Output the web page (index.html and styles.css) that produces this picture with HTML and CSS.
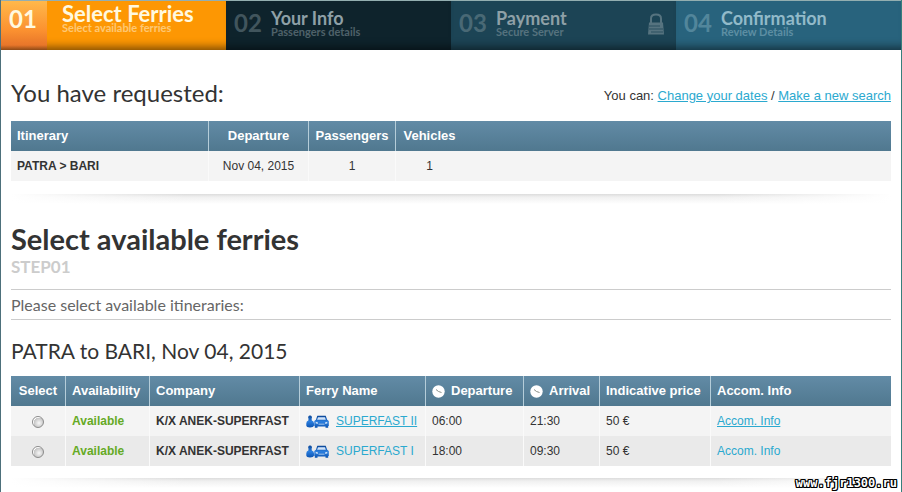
FILE: index.html
```
<!DOCTYPE html>
<html lang="en">
<head>
  <meta charset="UTF-8">
  <title>Select available ferries</title>
  <link rel="stylesheet" href="styles.css">
</head>
<body>

  <svg class="sprites" aria-hidden="true">
    <linearGradient id="blue" x1="0" y1="0" x2="0" y2="1">
      <stop offset="0" stop-color="#0a4595"/>
      <stop offset="0.5" stop-color="#2b7fe0"/>
      <stop offset="1" stop-color="#0c53b0"/>
    </linearGradient>
    <symbol id="clock" viewBox="0 0 13 13">
      <circle cx="6.5" cy="6.5" r="6.2" fill="#fff"/>
      <path d="M4 4.500L6.500 6.500L9.500 7.500" fill="none" stroke="#8a8f88" stroke-width="1"/>
    </symbol>
    <symbol id="car" viewBox="0 0 23 13">
      <path d="M4 0.500a1.800 2 0 0 1 1.600 3.200L5.800 5.400Q8 6 8 8.600v2Q7.500 12.500 4 12.500T0.300 10.600v-2Q0.300 6 2.400 5.400L2.500 3.700A1.800 2 0 0 1 4 0.500z" fill="url(#blue)"/>
      <path d="M11.300 0.800h8.400l1.500 4 1.600 1.200v5h-.6v1.800h-2.700V11.400h-8v1.400H8.800V11h-.5V6l1.600-1.200z" fill="url(#blue)"/>
      <path d="M12 2.300h7l.8 2.400h-8.700z" fill="#cfe2f8"/>
      <path d="M9.700 6.800l2.300.7v1.300l-2.300-.4zM21.300 6.800l-2.300.7v1.300l2.300-.4zM12.500 8.800h6v.7h-6z" fill="#cfe2f8"/>
    </symbol>
  </svg>

  <div class="page">
    <ol class="steps">
      <li class="step step-1 active">
        <span class="num">01</span>
        <div class="label">
          <div class="name">Select Ferries</div>
          <div class="hint">Select available ferries</div>
        </div>
      </li>
      <li class="step step-2">
        <span class="num">02</span>
        <div class="label">
          <div class="name">Your Info</div>
          <div class="hint">Passengers details</div>
        </div>
      </li>
      <li class="step step-3">
        <span class="num">03</span>
        <div class="label">
          <div class="name">Payment</div>
          <div class="hint">Secure Server</div>
        </div>
        <svg class="lock" viewBox="0 0 16 22" aria-hidden="true">
          <path d="M3 10V5.500Q3 1.500 8 1.500T13 5.500V10" fill="none" stroke="#56737f" stroke-width="2"/>
          <path d="M1 9.500h14l1 12H0z" fill="#56737f"/>
          <path d="M1 13h11M1 16h14M3 19h12" stroke="#2b5160"/>
        </svg>
      </li>
      <li class="step step-4">
        <span class="num">04</span>
        <div class="label">
          <div class="name">Confirmation</div>
          <div class="hint">Review Details</div>
        </div>
      </li>
    </ol>

    <main class="content">
      <div class="request-head">
        <h2>You have requested:</h2>
        <p>You can: <a href="#">Change your dates</a> / <a href="#">Make a new search</a></p>
      </div>

      <table class="grid request">
        <colgroup>
          <col class="c-itinerary"><col class="c-date"><col class="c-pass"><col class="c-veh"><col>
        </colgroup>
        <thead>
          <tr><th>Itinerary</th><th>Departure</th><th>Passengers</th><th>Vehicles</th><td></td></tr>
        </thead>
        <tbody>
          <tr><td><b>PATRA &gt; BARI</b></td><td>Nov 04, 2015</td><td>1</td><td>1</td><td></td></tr>
        </tbody>
      </table>
      <div class="shadow"></div>

      <h1>Select available ferries</h1>
      <div class="step-no">STEP01</div>
      <p class="notice">Please select available itineraries:</p>

      <h3>PATRA to BARI, Nov 04, 2015</h3>
      <table class="grid ferries">
        <colgroup>
          <col class="c-select"><col class="c-avail"><col class="c-company"><col class="c-ferry"><col class="c-dep"><col class="c-arr"><col class="c-price"><col>
        </colgroup>
        <thead>
          <tr>
            <th>Select</th>
            <th>Availability</th>
            <th>Company</th>
            <th>Ferry Name</th>
            <th><svg class="clock"><use href="#clock"/></svg>Departure</th>
            <th><svg class="clock"><use href="#clock"/></svg>Arrival</th>
            <th>Indicative price</th>
            <th>Accom. Info</th>
          </tr>
        </thead>
        <tbody>
          <tr>
            <td><input type="radio" name="ferry" aria-label="SUPERFAST II, 06:00"></td>
            <td class="available">Available</td>
            <td><b>K/X ANEK-SUPERFAST</b></td>
            <td><svg class="car"><use href="#car"/></svg><a href="#">SUPERFAST II</a></td>
            <td>06:00</td>
            <td>21:30</td>
            <td>50 €</td>
            <td><a href="#">Accom. Info</a></td>
          </tr>
          <tr>
            <td><input type="radio" name="ferry" aria-label="SUPERFAST I, 18:00"></td>
            <td class="available">Available</td>
            <td><b>K/X ANEK-SUPERFAST</b></td>
            <td><svg class="car"><use href="#car"/></svg><a href="#">SUPERFAST I</a></td>
            <td>18:00</td>
            <td>09:30</td>
            <td>50 €</td>
            <td><a href="#">Accom. Info</a></td>
          </tr>
        </tbody>
      </table>
      <div class="shadow"></div>
    </main>

    <div class="watermark">www.fjr1300.ru</div>
  </div>

</body>
</html>
```

FILE: styles.css
```
* {
  box-sizing: border-box;
}
body {
  margin: 0;
  font-family: "Liberation Sans", Arial, sans-serif;
  font-size: 12px;
  color: #333;
  background: #fff;
}
h1, h2, h3, p, ol {
  margin: 0;
  padding: 0;
}
a {
  color: #2ba9cf;
}
.sprites {
  position: absolute;
  width: 0;
  height: 0;
}
.page {
  position: relative;
  min-height: 100vh;
  border-left: 1px solid #4d707b;
  border-right: 1px solid #377f7c;
}

/* step bar */
.steps {
  display: flex;
  list-style: none;
  height: 50px;
  border-top: 1px solid #93aeb0;
  font-family: Lato, sans-serif;
  font-weight: bold;
}
.step {
  width: 25%;
  display: flex;
  align-items: flex-start;
  padding: 8px 12px 0 8px;
  color: #8ea0a7;
  box-shadow: inset 0 -10px 8px -7px rgba(0, 0, 0, 0.5);
}
.step .num {
  width: 37px;
  font-size: 24px;
  line-height: 28px;
  opacity: 0.4;
}
.step .name {
  font-size: 18px;
  line-height: 18px;
}
.step .hint {
  font-size: 11px;
  line-height: 9px;
  opacity: 0.5;
}
.step-2 {
  background: #0e232c;
}
.step-3 {
  background: #1c4455;
}
.step-4 {
  background: #28637d;
  color: #92bac9;
}
.step.active {
  padding: 0;
  background: #fd9703;
  color: #fff9e0;
}
.active .num {
  width: 46px;
  height: 49px;
  padding: 4px 8px;
  background: linear-gradient(#ffb84a, #fb9130 60%, #e8762a 90%, #8e4a16);
  opacity: 1;
}
.active .label {
  padding: 2px 0 0 15px;
}
.active .name {
  font-size: 22px;
  line-height: 22px;
}
.active .hint {
  line-height: 6px;
}
.lock {
  width: 16px;
  height: 22px;
  margin: 4px 0 0 auto;
}

/* headings */
.content {
  padding: 26px 10px 0;
}
.request-head {
  display: flex;
  justify-content: space-between;
  align-items: flex-start;
  height: 45px;
}
.request-head p {
  padding-top: 12px;
  font-size: 13px;
}
h1, h2, h3, .step-no, .notice {
  font-family: Lato, sans-serif;
}
h2 {
  font-size: 24px;
  line-height: 34px;
  font-weight: normal;
}
h1 {
  margin-top: 7px;
  font-size: 29px;
  line-height: 36px;
}
.step-no {
  font-size: 17px;
  line-height: 20px;
  font-weight: bold;
  color: #ccc;
}
.notice {
  margin-top: 12px;
  border: 1px solid #ccc;
  border-width: 1px 0;
  font-size: 16px;
  line-height: 29px;
  color: #666;
}
h3 {
  padding: 16px 0 10px;
  font-size: 21px;
  line-height: 30px;
  font-weight: normal;
}

/* tables */
.grid {
  width: 100%;
  table-layout: fixed;
  border-collapse: separate;
  border-spacing: 0;
}
.grid th, .grid td {
  height: 30px;
  padding: 0 0 0 6px;
  border-left: 1px solid #fafafa;
  text-align: left;
  white-space: nowrap;
}
.grid thead {
  color: #fff;
}
.grid thead th, .grid thead td {
  background: linear-gradient(#628ba6, #50788f);
  border-color: #b5cdd9;
}
.grid th:first-child, .grid td:first-child {
  border-left: 0;
}
.grid tbody td {
  background: #f4f4f4;
}
.grid tbody tr:nth-child(2) td {
  background: #eaeaea;
}
.grid th {
  padding-bottom: 1px;
  font-size: 13px;
}
.request th:not(:first-child), .request td:not(:first-child) {
  padding-left: 0;
  text-align: center;
}
.request tr > :last-child {
  border-left: 0;
}
.c-itinerary { width: 197px; }
.c-date { width: 100px; }
.c-pass { width: 87px; }
.c-veh { width: 68px; }
.c-select { width: 54px; }
.c-avail { width: 84px; }
.c-company { width: 150px; }
.c-ferry { width: 126px; }
.c-dep { width: 98px; }
.c-arr { width: 76px; }
.c-price { width: 111px; }

.ferries th:first-child, .ferries td:first-child {
  padding-left: 0;
  text-align: center;
}
.ferries .available {
  color: #65aa25;
  font-weight: bold;
}
.ferries tr:nth-child(2) a {
  text-decoration: none;
}
.ferries input {
  appearance: none;
  width: 12px;
  height: 12px;
  margin: 0;
  border: 1px solid #8b8b8b;
  border-radius: 50%;
  background: radial-gradient(circle at 60% 60%, #f8f8f8, #c4c4c4 60%, #fff 65%);
  vertical-align: middle;
}
.clock {
  width: 13px;
  height: 13px;
  margin-right: 6px;
  vertical-align: -3px;
}
.car {
  width: 23px;
  height: 13px;
  margin-right: 7px;
  vertical-align: -3px;
}
.shadow {
  height: 20px;
  margin-top: 13px;
  background:
    linear-gradient(90deg, #fff, transparent 20%, transparent 80%, #fff),
    linear-gradient(#dcdcdc, #f0f0f0 3px, #fff 10px);
}
.ferries + .shadow {
  height: 12px;
  margin-top: 12px;
}

.watermark {
  position: absolute;
  right: 4px;
  bottom: 2px;
  font: bold 12px/14px "DejaVu Sans Mono", monospace;
  color: #fff;
  text-shadow: 1px 0 #000, -1px 0 #000, 0 1px #000, 0 -1px #000, 1px 1px #000, -1px -1px #000, 1px -1px #000, -1px 1px #000;
}
```
